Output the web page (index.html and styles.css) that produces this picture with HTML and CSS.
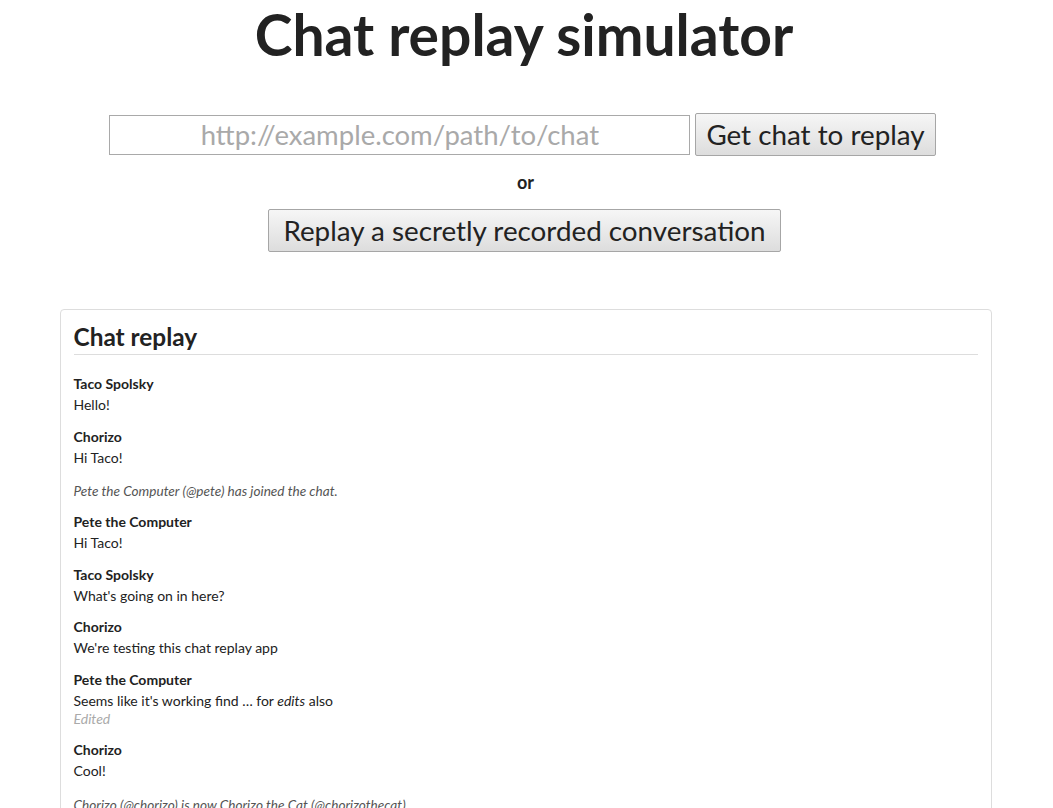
FILE: index.html
```html
<!DOCTYPE html>
<html>
<head>
<meta charset="utf-8">
<title>Chat replay simulator</title>
<link rel="stylesheet" href="styles.css">
</head>
<body>
<div class="page">
  <h1 class="title">Chat replay simulator</h1>
  <div class="fetch-row">
    <input class="url-input" type="text" placeholder="http://example.com/path/to/chat">
    <button class="btn">Get chat to replay</button>
  </div>
  <div class="or">or</div>
  <div class="secret-row">
    <button class="btn btn-wide">Replay a secretly recorded conversation</button>
  </div>
  <div class="card">
    <h2 class="card-title">Chat replay</h2>
    <div class="messages">
      <div class="msg">
        <div class="msg-name">Taco Spolsky</div>
        <div class="msg-text">Hello!</div>
      </div>
      <div class="msg">
        <div class="msg-name">Chorizo</div>
        <div class="msg-text">Hi Taco!</div>
      </div>
      <div class="sys">Pete the Computer (@pete) has joined the chat.</div>
      <div class="msg">
        <div class="msg-name">Pete the Computer</div>
        <div class="msg-text">Hi Taco!</div>
      </div>
      <div class="msg">
        <div class="msg-name">Taco Spolsky</div>
        <div class="msg-text">What's going on in here?</div>
      </div>
      <div class="msg">
        <div class="msg-name">Chorizo</div>
        <div class="msg-text">We're testing this chat replay app</div>
      </div>
      <div class="msg">
        <div class="msg-name">Pete the Computer</div>
        <div class="msg-text">Seems like it's working find … for <em>edits</em> also</div>
        <div class="msg-edited">Edited</div>
      </div>
      <div class="msg">
        <div class="msg-name">Chorizo</div>
        <div class="msg-text">Cool!</div>
      </div>
      <div class="sys">Chorizo (@chorizo) is now Chorizo the Cat (@chorizothecat)</div>
      <div class="msg">
        <div class="msg-name">Chorizo the Cat</div>
        <div class="msg-text">Meow</div>
      </div>
    </div>
  </div>
</div>
</body>
</html>
```

FILE: styles.css
```css
html, body {
  margin: 0;
  padding: 0;
  background: #fff;
}
body {
  font-family: Lato, "Open Sans", sans-serif;
  color: #222;
}
.page {
  width: 932px;
  margin: 0 auto;
  padding-top: 0;
  position: relative;
  left: -1px;
}
.title {
  margin: 0;
  text-align: center;
  font-size: 57px;
  font-weight: 700;
  line-height: 68px;
  color: #222;
  padding-right: 3px;
}
.fetch-row {
  margin-top: 45px;
  display: flex;
  justify-content: center;
  align-items: center;
  gap: 5px;
  padding-right: 6px;
}
.url-input {
  box-sizing: border-box;
  width: 581px;
  height: 40px;
  border: 1px solid #a9a9a9;
  border-radius: 0;
  padding: 0 8px;
  font-family: Lato, sans-serif;
  font-size: 27.5px;
  text-align: center;
  color: #222;
  outline: none;
}
.url-input::placeholder {
  color: #a9a9a9;
}
.btn {
  box-sizing: border-box;
  height: 43px;
  padding: 0 10px;
  border: 1px solid #a6a6a6;
  border-radius: 2px;
  background: linear-gradient(#f6f6f6, #dddddd);
  font-family: Lato, sans-serif;
  font-size: 27.8px;
  color: #222;
  line-height: 1;
}
.btn-wide {
  padding: 0 14px;
}
.or {
  margin-top: 15px;
  text-align: center;
  font-weight: 700;
  font-size: 18px;
  line-height: 22px;
}
.secret-row {
  margin-top: 16px;
  display: flex;
  justify-content: center;
  padding-right: 2px;
}
.card {
  margin-top: 57px;
  border: 1px solid #dddddd;
  border-radius: 4px;
  padding: 11px 13px 14px;
}
.card-title {
  margin: 0;
  font-size: 24.4px;
  font-weight: 700;
  line-height: 32px;
  padding-bottom: 1px;
  border-bottom: 1px solid #dddddd;
}
.messages {
  padding-top: 18px;
  font-size: 14px;
}
.msg {
  margin-bottom: 10px;
}
.msg-name {
  font-weight: 700;
  line-height: 21px;
}
.msg-text {
  line-height: 21.5px;
}
.msg-edited {
  font-style: italic;
  font-size: 14px;
  color: #aaa;
  line-height: 15px;
  padding-bottom: 3px;
}
.sys {
  font-style: italic;
  font-size: 13.6px;
  color: #555;
  line-height: 20px;
  margin: 13px 0 10px;
}
```
